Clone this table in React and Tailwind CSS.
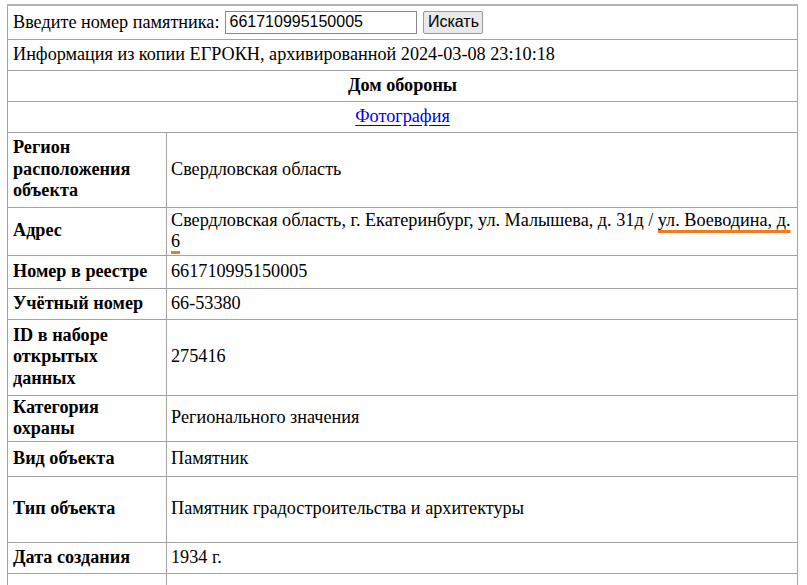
export default function App() {
  const rows = [
    { label: ["Регион", "расположения", "объекта"], value: "Свердловская область", h: "h-[75px]" },
    { label: ["Адрес"], value: "addr", h: "h-[48px]" },
    { label: ["Номер в реестре"], value: "661710995150005", h: "h-[33px]" },
    { label: ["Учётный номер"], value: "66-53380", h: "h-[31px]" },
    { label: ["ID в наборе", "открытых", "данных"], value: "275416", h: "h-[76px]" },
    { label: ["Категория", "охраны"], value: "Регионального значения", h: "h-[46px]" },
    { label: ["Вид объекта"], value: "Памятник", h: "h-[35px]" },
    { label: ["Тип объекта"], value: "Памятник градостроительства и архитектуры", h: "h-[66px]" },
    { label: ["Дата создания"], value: "1934 г.", h: "h-[31px]" },
    { label: [""], value: "", h: "h-[40px]" },
  ];
  const cell = "border border-[#a3a3a3] px-[5px] py-[1px] align-middle";
  return (
    <div className="w-[807px] h-[585px] overflow-hidden bg-white pl-[7px] pt-[4px] font-['Liberation_Serif',serif] text-[18.2px] leading-[21.5px] text-black">
      <table className="w-[791px] border-collapse border-t-2 border-t-[#b4b4b4] table-fixed">
        <colgroup>
          <col className="w-[159px]" />
          <col />
        </colgroup>
        <tbody>
          <tr className="h-[34px]">
            <td colSpan={2} className={cell}>
              <div className="flex items-center">
                <span>Введите номер памятника:</span>
                <input
                  defaultValue="661710995150005"
                  className="ml-[6px] w-[192px] h-[23px] border border-[#8a8a8a] px-[3px] font-['Liberation_Sans',sans-serif] text-[16px] text-black outline-none"
                />
                <button className="ml-[6px] w-[60px] h-[23px] border border-[#9a9a9a] rounded-[2px] bg-[#e9e9e9] font-['Liberation_Sans',sans-serif] text-[16px] leading-[20px] text-black">
                  Искать
                </button>
              </div>
            </td>
          </tr>
          <tr className="h-[31px]">
            <td colSpan={2} className={cell}>
              Информация из копии ЕГРОКН, архивированной 2024-03-08 23:10:18
            </td>
          </tr>
          <tr className="h-[31px]">
            <td colSpan={2} className={cell + " text-center font-bold"}>
              Дом обороны
            </td>
          </tr>
          <tr className="h-[31px]">
            <td colSpan={2} className={cell + " text-center"}>
              <a href="#" className="text-[#0000ee] underline underline-offset-[3px]">
                Фотография
              </a>
            </td>
          </tr>
          {rows.map((r, i) => (
            <tr key={i} className={r.h}>
              <td className={cell + " font-bold"}>
                {r.label.map((l, j) => (
                  <div key={j}>{l}</div>
                ))}
              </td>
              <td className={cell + " pl-[4px] pr-[2px]"}>
                {r.value === "addr" ? (
                  <span>
                    Свердловская область, г. Екатеринбург, ул. Малышева, д. 31д /{" "}
                    <span className="underline decoration-[#f07b20] decoration-[3px] underline-offset-[4px] [text-decoration-skip-ink:none]">
                      ул. Воеводина, д. 6
                    </span>
                  </span>
                ) : (
                  r.value
                )}
              </td>
            </tr>
          ))}
        </tbody>
      </table>
    </div>
  );
}
